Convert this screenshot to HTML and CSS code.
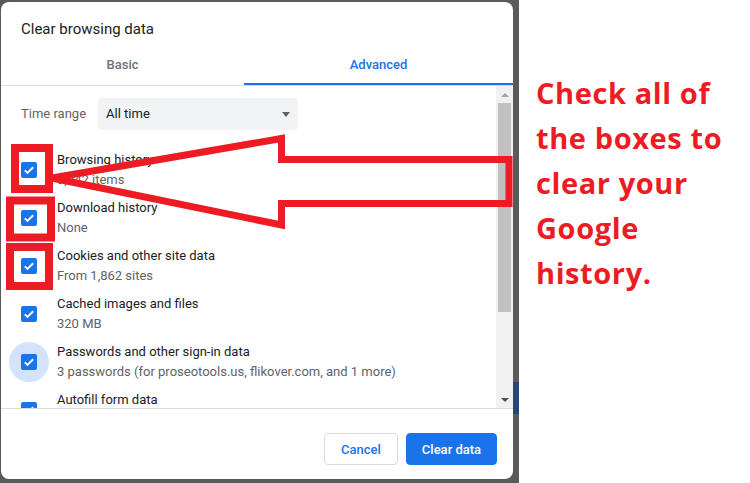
FILE: index.html
```html
<!DOCTYPE html>
<html>
<head>
<meta charset="utf-8">
<link rel="stylesheet" href="styles.css">
</head>
<body>
<div class="page">
  <div class="backdrop">
    <div class="dialog">
      <div class="title">Clear browsing data</div>
      <div class="tabs">
        <div class="tab">Basic</div>
        <div class="tab active">Advanced</div>
      </div>
      <div class="content">
        <div class="list">
          <div class="range">
            <span class="range-label">Time range</span>
            <div class="select"><span>All time</span><span class="caret"></span></div>
          </div>
          <div class="item">
            <span class="cb"><svg viewBox="0 0 16 16" width="16" height="16"><path d="M3.8 8.3l2.7 2.6 5.7-5.6" fill="none" stroke="#fff" stroke-width="2"/></svg></span>
            <div class="text"><div class="t">Browsing history</div><div class="s">3,042 items</div></div>
          </div>
          <div class="item">
            <span class="cb"><svg viewBox="0 0 16 16" width="16" height="16"><path d="M3.8 8.3l2.7 2.6 5.7-5.6" fill="none" stroke="#fff" stroke-width="2"/></svg></span>
            <div class="text"><div class="t">Download history</div><div class="s">None</div></div>
          </div>
          <div class="item">
            <span class="cb"><svg viewBox="0 0 16 16" width="16" height="16"><path d="M3.8 8.3l2.7 2.6 5.7-5.6" fill="none" stroke="#fff" stroke-width="2"/></svg></span>
            <div class="text"><div class="t">Cookies and other site data</div><div class="s">From 1,862 sites</div></div>
          </div>
          <div class="item">
            <span class="cb"><svg viewBox="0 0 16 16" width="16" height="16"><path d="M3.8 8.3l2.7 2.6 5.7-5.6" fill="none" stroke="#fff" stroke-width="2"/></svg></span>
            <div class="text"><div class="t">Cached images and files</div><div class="s">320 MB</div></div>
          </div>
          <div class="item">
            <span class="ripple"><span class="cb"><svg viewBox="0 0 16 16" width="16" height="16"><path d="M3.8 8.3l2.7 2.6 5.7-5.6" fill="none" stroke="#fff" stroke-width="2"/></svg></span></span>
            <div class="text"><div class="t">Passwords and other sign-in data</div><div class="s">3 passwords (for proseotools.us, flikover.com, and 1 more)</div></div>
          </div>
          <div class="item">
            <span class="cb"><svg viewBox="0 0 16 16" width="16" height="16"><path d="M3.8 8.3l2.7 2.6 5.7-5.6" fill="none" stroke="#fff" stroke-width="2"/></svg></span>
            <div class="text single"><div class="t">Autofill form data</div></div>
          </div>
        </div>
        <div class="scrollbar">
          <div class="sb-btn"><span class="arrow-up"></span></div>
          <div class="thumb"></div>
          <div class="sb-fill"></div>
          <div class="sb-btn"><span class="arrow-down"></span></div>
        </div>
      </div>
      <div class="footer">
        <button class="btn cancel">Cancel</button>
        <button class="btn primary">Clear data</button>
      </div>
    </div>
    <div class="strip"><div class="strip-block"></div></div>
  </div>
  <div class="note">Check all of<br>the boxes to<br>clear your<br>Google<br>history.</div>
  <svg class="annot" width="750" height="483" viewBox="0 0 750 483">
    <g fill="none" stroke="#ed1c24" stroke-width="8">
      <rect x="15" y="148" width="34" height="41"/>
      <rect x="10" y="200.5" width="41" height="37"/>
      <rect x="10" y="247" width="39" height="39"/>
    </g>
    <polygon points="52,178 281.5,138.5 281.5,159.5 509,159.5 509,203.5 281.5,203.5 281.5,225" fill="none" stroke="#ed1c24" stroke-width="7" stroke-linejoin="miter"/>
  </svg>
</div>
</body>
</html>
```

FILE: styles.css
```css
* { box-sizing: border-box; }
html, body { margin: 0; padding: 0; background: #fff; }
body { width: 750px; height: 483px; overflow: hidden; font-family: Roboto, "Liberation Sans", sans-serif; }

.page { position: relative; display: flex; width: 750px; height: 483px; }

.backdrop {
  width: 519px; height: 483px; flex: none;
  background: #5a5a5a;
  padding: 2px 0 4px 1px;
  display: flex;
}
.strip { width: 6px; flex: none; padding-top: 380px; }
.strip-block { height: 32px; background: #26467a; }

.dialog {
  width: 512px; height: 477px; flex: none;
  background: #fff; border-radius: 8px; overflow: hidden;
  display: flex; flex-direction: column;
}

.title {
  padding: 17px 20px 0; font-size: 15px; line-height: 20px; color: #202124;
}

.tabs {
  margin-top: 5px;
  display: grid; grid-template-columns: 243px 1fr;
  border-bottom: 1px solid #dadce0;
}
.tab {
  height: 41px; display: flex; align-items: center; justify-content: center;
  font-size: 13px; font-weight: 500; color: #6e7175;
}
.tab.active { color: #1a73e8; box-shadow: inset 0 -2px 0 #1a73e8; }

.content { height: 322px; display: flex; flex: none; }
.list { flex: 1; overflow: hidden; padding: 12px 0 0 20px; font-size: 13px; line-height: 20px; }

.range { display: flex; align-items: center; gap: 12px; height: 32px; margin-bottom: 16px; }
.range-label { color: #5f6368; }
.select {
  width: 200px; height: 32px; background: #f1f3f4; border-radius: 4px;
  display: flex; align-items: center; justify-content: space-between;
  padding: 0 8px; color: #202124;
}
.caret { width: 0; height: 0; border-left: 4px solid transparent; border-right: 4px solid transparent; border-top: 5px solid #5f6368; }

.item { height: 48px; display: flex; align-items: center; gap: 20px; flex: none; }
.cb { width: 16px; height: 16px; flex: none; background: #1a73e8; border-radius: 2px; display: block; }
.cb svg { display: block; }
.ripple {
  width: 40px; height: 40px; margin: -12px; flex: none;
  border-radius: 50%; background: #d3e3fc;
  display: grid; place-items: center;
}
.text.single { padding-bottom: 20px; }
.t { color: #202124; white-space: nowrap; }
.s { color: #5f6368; white-space: nowrap; }

.scrollbar { width: 17px; flex: none; background: #f1f1f1; display: flex; flex-direction: column; }
.sb-btn { height: 17px; display: flex; align-items: center; justify-content: center; flex: none; }
.arrow-up { width: 0; height: 0; border-left: 4px solid transparent; border-right: 4px solid transparent; border-bottom: 4px solid #a3a3a3; }
.arrow-down { width: 0; height: 0; border-left: 4px solid transparent; border-right: 4px solid transparent; border-top: 4px solid #505050; }
.thumb { height: 209px; margin: 0 2px; background: #c1c1c1; flex: none; }
.sb-fill { flex: 1; }

.footer {
  border-top: 1px solid #dadce0; flex: 1;
  display: flex; justify-content: flex-end; align-items: flex-start; gap: 8px;
  padding: 24px 16px 0 0;
}
.btn {
  height: 32px; padding: 0; border-radius: 4px; white-space: nowrap;
  font-family: Roboto, "Liberation Sans", sans-serif; font-size: 13px; font-weight: 500;
  cursor: pointer;
}
.cancel { background: #fff; border: 1px solid #dadce0; color: #1a73e8; width: 74px; }
.primary { background: #1a73e8; border: 1px solid #1a73e8; color: #fff; width: 91px; }

.note {
  padding: 70px 0 0 17px;
  font-family: "Open Sans", Lato, sans-serif; font-weight: 700;
  font-size: 29px; letter-spacing: 0.6px; line-height: 45px; color: #ed1c24; white-space: nowrap;
}

.annot { position: absolute; left: 0; top: 0; pointer-events: none; }
```
